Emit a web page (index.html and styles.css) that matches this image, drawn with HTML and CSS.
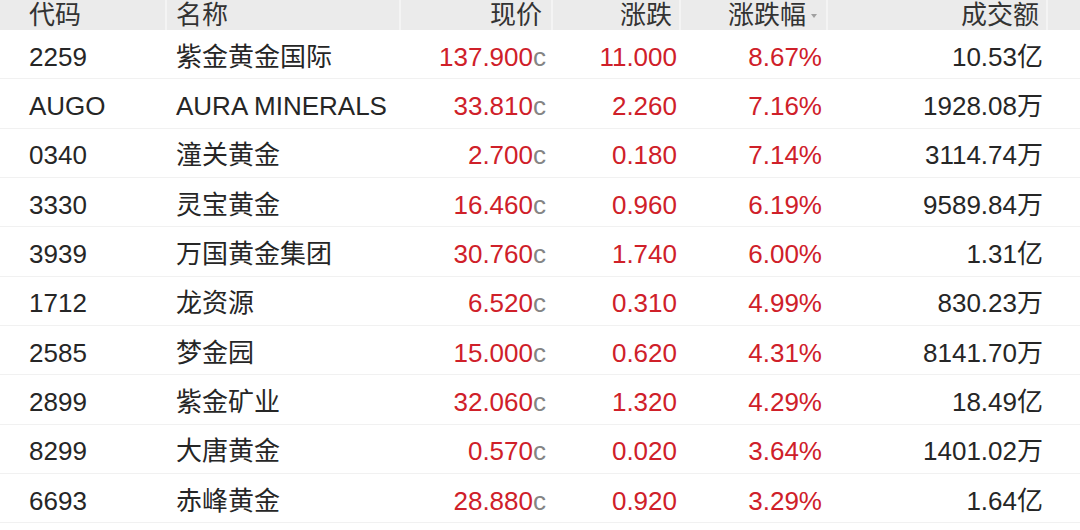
FILE: index.html
```html
<!DOCTYPE html>
<html lang="zh">
<head>
<meta charset="utf-8">
<title>黄金股涨幅榜</title>
<link rel="stylesheet" href="styles.css">
</head>
<body>
<div class="table">
  <div class="row head">
    <div class="c1">代码</div>
    <div class="c2">名称</div>
    <div class="c3">现价</div>
    <div class="c4">涨跌</div>
    <div class="c5">涨跌幅<span class="sort"></span></div>
    <div class="c6">成交额</div>
    <div class="c7"></div>
  </div>
  <div class="row"><div class="c1">2259</div><div class="c2">紫金黄金国际</div><div class="c3 up">137.900<span class="cur">c</span></div><div class="c4 up">11.000</div><div class="c5 up">8.67%</div><div class="c6">10.53亿</div><div class="c7"></div></div>
  <div class="row"><div class="c1">AUGO</div><div class="c2">AURA MINERALS</div><div class="c3 up">33.810<span class="cur">c</span></div><div class="c4 up">2.260</div><div class="c5 up">7.16%</div><div class="c6">1928.08万</div><div class="c7"></div></div>
  <div class="row"><div class="c1">0340</div><div class="c2">潼关黄金</div><div class="c3 up">2.700<span class="cur">c</span></div><div class="c4 up">0.180</div><div class="c5 up">7.14%</div><div class="c6">3114.74万</div><div class="c7"></div></div>
  <div class="row"><div class="c1">3330</div><div class="c2">灵宝黄金</div><div class="c3 up">16.460<span class="cur">c</span></div><div class="c4 up">0.960</div><div class="c5 up">6.19%</div><div class="c6">9589.84万</div><div class="c7"></div></div>
  <div class="row"><div class="c1">3939</div><div class="c2">万国黄金集团</div><div class="c3 up">30.760<span class="cur">c</span></div><div class="c4 up">1.740</div><div class="c5 up">6.00%</div><div class="c6">1.31亿</div><div class="c7"></div></div>
  <div class="row"><div class="c1">1712</div><div class="c2">龙资源</div><div class="c3 up">6.520<span class="cur">c</span></div><div class="c4 up">0.310</div><div class="c5 up">4.99%</div><div class="c6">830.23万</div><div class="c7"></div></div>
  <div class="row"><div class="c1">2585</div><div class="c2">梦金园</div><div class="c3 up">15.000<span class="cur">c</span></div><div class="c4 up">0.620</div><div class="c5 up">4.31%</div><div class="c6">8141.70万</div><div class="c7"></div></div>
  <div class="row"><div class="c1">2899</div><div class="c2">紫金矿业</div><div class="c3 up">32.060<span class="cur">c</span></div><div class="c4 up">1.320</div><div class="c5 up">4.29%</div><div class="c6">18.49亿</div><div class="c7"></div></div>
  <div class="row"><div class="c1">8299</div><div class="c2">大唐黄金</div><div class="c3 up">0.570<span class="cur">c</span></div><div class="c4 up">0.020</div><div class="c5 up">3.64%</div><div class="c6">1401.02万</div><div class="c7"></div></div>
  <div class="row"><div class="c1">6693</div><div class="c2">赤峰黄金</div><div class="c3 up">28.880<span class="cur">c</span></div><div class="c4 up">0.920</div><div class="c5 up">3.29%</div><div class="c6">1.64亿</div><div class="c7"></div></div>
</div>
</body>
</html>
```

FILE: styles.css
```css
html, body {
  margin: 0;
  padding: 0;
  background: #ffffff;
}
body {
  width: 1080px;
  height: 530px;
  overflow: hidden;
  font-family: "Liberation Sans", "Noto Sans CJK SC", sans-serif;
  font-size: 26px;
  color: #262626;
}
.table {
  display: flex;
  flex-direction: column;
}
.row {
  display: grid;
  grid-template-columns: 167px 234px 152px 128px 147px 220px 32px;
  height: 49.33px;
  padding-top: 5px;
  align-items: center;
  border-bottom: 1px solid #f1f1f1;
  box-sizing: border-box;
  line-height: 30px;
}
.row.head {
  height: 30px;
  padding-top: 0;
  background: #ebebeb;
  border-bottom: none;
  color: #333333;
}
.row.head > div {
  height: 100%;
  display: flex;
  align-items: center;
  box-sizing: border-box;
  border-right: 2px solid #f4f4f4;
}
.row.head > .c3,
.row.head > .c4,
.row.head > .c5,
.row.head > .c6 {
  justify-content: flex-end;
}
.row.head > .c7 {
  border-right: none;
}
.c1 { padding-left: 29px; }
.c2 { padding-left: 9px; white-space: nowrap; }
.c3 { text-align: right; padding-right: 7px; }
.c4 { text-align: right; padding-right: 4px; }
.c5 { text-align: right; padding-right: 6px; }
.c6 { text-align: right; padding-right: 5px; }
.row.head > .c3 { padding-right: 9px; }
.row.head > .c4 { padding-right: 7px; }
.row.head > .c5 { padding-right: 9px; }
.row.head > .c6 { padding-right: 7px; }
.up { color: #cf2029; }
.cur { color: #848484; }
.sort {
  display: inline-block;
  width: 0;
  height: 0;
  margin-left: 5px;
  margin-top: 2px;
  border-left: 3px solid transparent;
  border-right: 3px solid transparent;
  border-top: 4px solid #a0a0a0;
}
```
